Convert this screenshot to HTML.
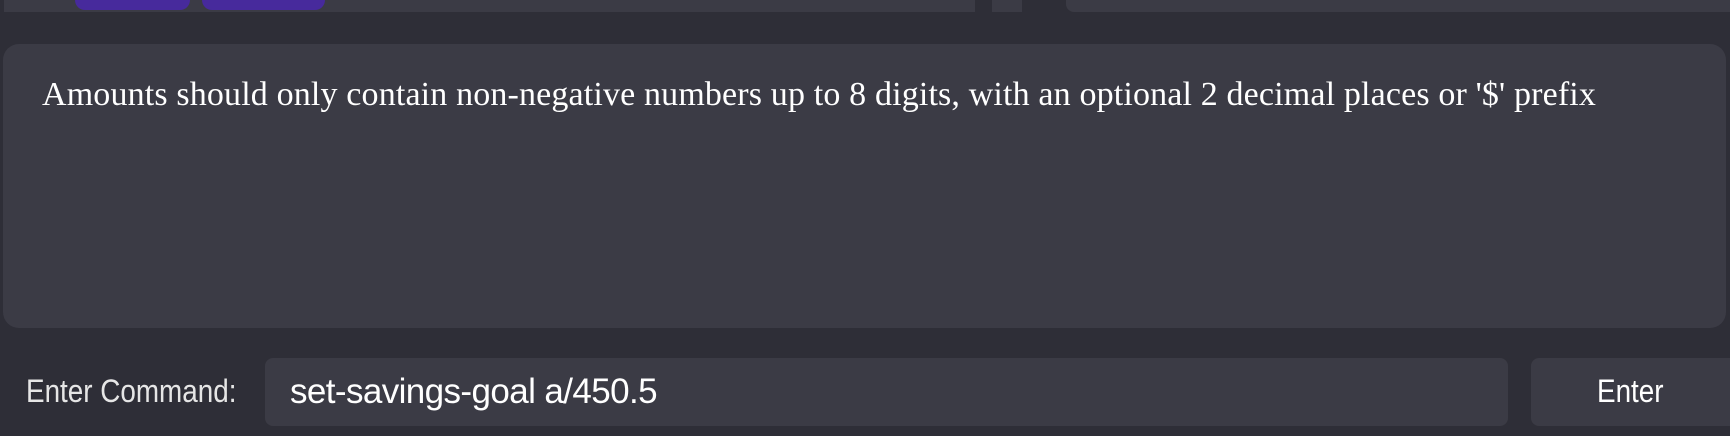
<!DOCTYPE html>
<html><head><style>
html,body{margin:0;padding:0;width:1730px;height:436px;overflow:hidden;background:#2e2e37;}
.a{position:absolute;background:#3b3b45;}
.p{position:absolute;background:#472a9c;border-radius:0 0 12px 12px;}
.t{position:absolute;white-space:nowrap;color:#fff;transform-origin:0 0;}
</style></head><body>
<div class="a" style="left:4px;top:0;width:971px;height:12px"></div>
<div class="p" style="left:75px;top:0;width:115px;height:10px"></div>
<div class="p" style="left:202px;top:0;width:123px;height:10px"></div>
<div class="a" style="left:992px;top:0;width:30px;height:12px"></div>
<div class="a" style="left:1066px;top:0;width:664px;height:12px;border-radius:0 0 0 8px"></div>
<div class="a" style="left:3px;top:44px;width:1723px;height:284px;border-radius:16px"></div>
<div class="t" style="left:42px;top:76px;font:34px 'Liberation Serif',serif;letter-spacing:0.15px;">Amounts should only contain non-negative numbers up to 8 digits, with an optional 2 decimal places or '$' prefix</div>
<div class="t" style="left:26px;top:373px;font:32px 'Liberation Sans',sans-serif;color:#e6e6e6;transform:scaleX(0.87);">Enter Command:</div>
<div class="a" style="left:265px;top:358px;width:1243px;height:68px;border-radius:8px"></div>
<div class="t" style="left:290px;top:372px;font:35px 'Liberation Sans',sans-serif;letter-spacing:-0.6px;">set-savings-goal a/450.5</div>
<div class="a" style="left:1531px;top:358px;width:199px;height:68px;border-radius:8px 0 0 8px"></div>
<div class="t" style="left:1597px;top:373px;font:32px 'Liberation Sans',sans-serif;transform:scaleX(0.87);">Enter</div>
</body></html>
